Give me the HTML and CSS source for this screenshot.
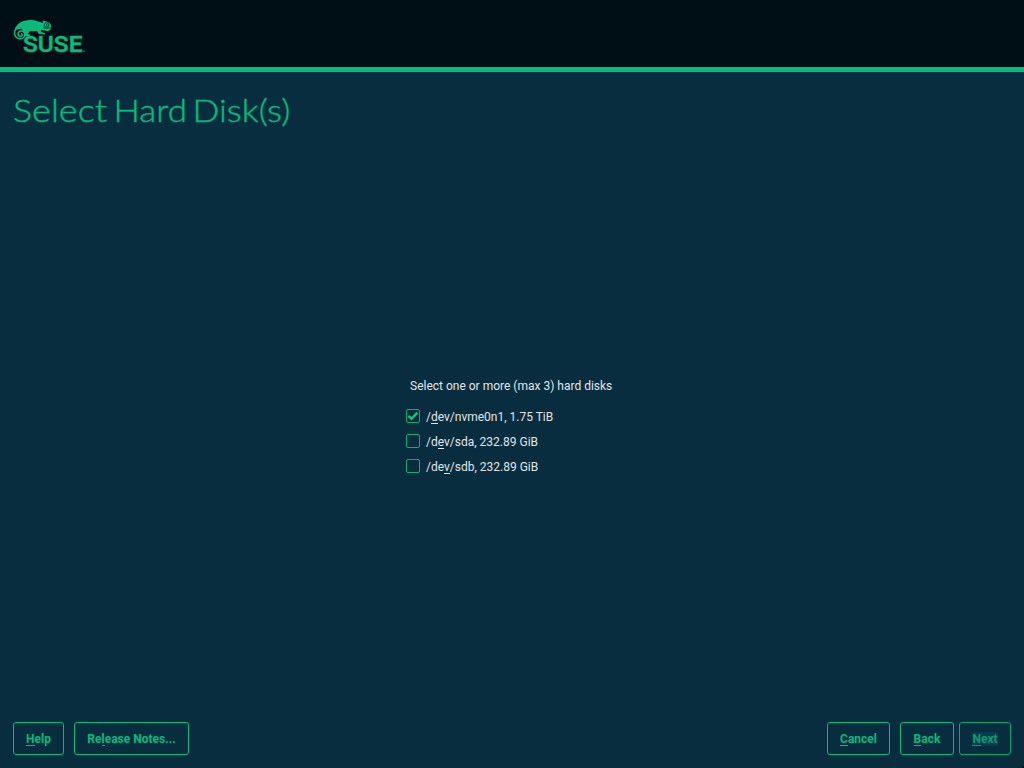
FILE: index.html
```html
<!DOCTYPE html>
<html lang="en">
<head>
<meta charset="utf-8">
<title>Select Hard Disk(s)</title>
<link rel="stylesheet" href="styles.css">
</head>
<body>
<div class="installer">
  <header class="banner">
    <svg class="logo" viewBox="0 0 76 40" width="76" height="40" role="img" aria-label="SUSE">
      <path class="lizard" d="M1.500 14C3 8 9 4 17 4C23 4 27 6 30 7L29.500 4.500C33 5 36 6 37.500 8C38.500 10 38 13 36.500 14.500C34 16 31 13.500 28 14L28 16L32 17L32 18.500L26 18L24 15L17 15L14.500 18L17 18.500L17 20L12 20L11 16L8 12.500Z"/>
      <path class="curl" d="M9 12C4 11 1 14 1.500 18C2 22 7 24 10 22C13 20 12 15 8.500 15C4.500 15 4 19.500 7 20.300C9.500 20.700 10 17.800 8 17.800"/>
      <circle class="eye" cx="33.500" cy="9" r="2.300"/>
      <circle class="pupil" cx="33.800" cy="9" r=".8"/>
      <path class="mouth" d="M37.500 11.500Q34 13.500 30 11.500"/>
      <text class="wordmark" x="10" y="36.200" textLength="59.500" lengthAdjust="spacingAndGlyphs">SUSE</text>
      <circle class="lizard" cx="71" cy="35.200" r=".7"/>
    </svg>
  </header>
  <h1 class="title">
    <svg class="heading" width="300" height="42"><text y="32"><tspan x="0" textLength="94" lengthAdjust="spacingAndGlyphs">Select</tspan> <tspan x="100.500" textLength="73.500" lengthAdjust="spacingAndGlyphs">Hard</tspan> <tspan x="179.500" textLength="98" lengthAdjust="spacingAndGlyphs">Disk(s)</tspan></text></svg>
  </h1>
  <main class="content">
    <form class="disks">
      <p class="prompt">Select one or more (max 3) hard disks</p>
      <label class="disk"><span class="box"><svg viewBox="0 0 12 12" width="12" height="12"><path class="check" d="M1.500 6L4.500 8.700L10.500 2.700"/></svg></span><span>/<span class="key">d</span>ev/nvme0n1, 1.75 TiB</span></label>
      <label class="disk"><span class="box"></span><span>/d<span class="key">e</span>v/sda, 232.89 GiB</span></label>
      <label class="disk"><span class="box"></span><span>/de<span class="key">v</span>/sdb, 232.89 GiB</span></label>
    </form>
  </main>
  <footer class="actions">
    <button class="button help"><span><span class="key">H</span>elp</span></button>
    <button class="button notes"><span>Re<span class="key">l</span>ease Notes...</span></button>
    <button class="button cancel"><span><span class="key">C</span>ancel</span></button>
    <button class="button back"><span><span class="key">B</span>ack</span></button>
    <button class="button next"><span class="focus"><span class="key">N</span>ext</span></button>
  </footer>
  <svg class="pointer" width="2" height="3"><path d="M0 0L2 2V3H0Z"/></svg>
</div>
</body>
</html>
```
FILE: styles.css
```css
* { box-sizing: border-box; }
body { margin: 0; background: #082d3f; color: #e0e5e7; font: 12px/14px Roboto, sans-serif; }
.installer { height: 768px; display: flex; flex-direction: column; overflow: hidden; position: relative; }
.banner { height: 72px; flex: none; background: #000f16; border-bottom: 5px solid #02bd7e; padding: 16px 13px; }
.logo { display: block; }
.lizard { fill: #0bb97c; }
.eye { fill: #0bb97c; stroke: #06291f; stroke-width: .8; }
.pupil { fill: #06291f; }
.mouth { fill: none; stroke: #06291f; stroke-width: .7; }
.curl { fill: none; stroke: #0bb97c; stroke-width: 1.5; }
.wordmark { font: 500 22px Roboto, sans-serif; fill: #0bb97c; stroke: #0bb97c; stroke-width: .5; }
.title { margin: 18px 0 0 13px; height: 42px; font: 300 32px/42px Lato, sans-serif; }
.heading { display: block; fill: #02bd7e; stroke: #02bd7e; stroke-width: .4; }
.content { flex: 1; display: flex; padding: 247px 0 0 406px; }
.disks { display: flex; flex-direction: column; }
.prompt { margin: 0 0 11px 4px; height: 14px; white-space: nowrap; }
.disk { display: flex; align-items: center; gap: 6px; height: 25px; white-space: nowrap; }
.box { width: 14px; height: 14px; border: 1px solid #0cae75; border-radius: 2px; margin-bottom: 1px; }
.box svg { display: block; }
.check { fill: none; stroke: #25b777; stroke-width: 2.6; }
.key { background: linear-gradient(currentColor, currentColor) left bottom / 100% 1px no-repeat; }
.actions { height: 46px; flex: none; display: flex; padding: 0 13px; }
.button { height: 33px; border: 1px solid #02bd7e; border-radius: 3px; background: transparent; color: #02bd7e; font: 700 12px/14px Roboto, sans-serif; padding: 0; white-space: nowrap; }
.help { width: 51px; margin-right: 10px; }
.notes { width: 115px; margin-right: auto; }
.cancel { width: 63px; margin-right: 10px; }
.back { width: 54px; margin-right: 5px; }
.next { width: 52px; color: #0a9f6c; border-color: #06a970; }
.focus { background: #063b51; }
.pointer { position: absolute; right: 0; bottom: 0; fill: #000; }
```
